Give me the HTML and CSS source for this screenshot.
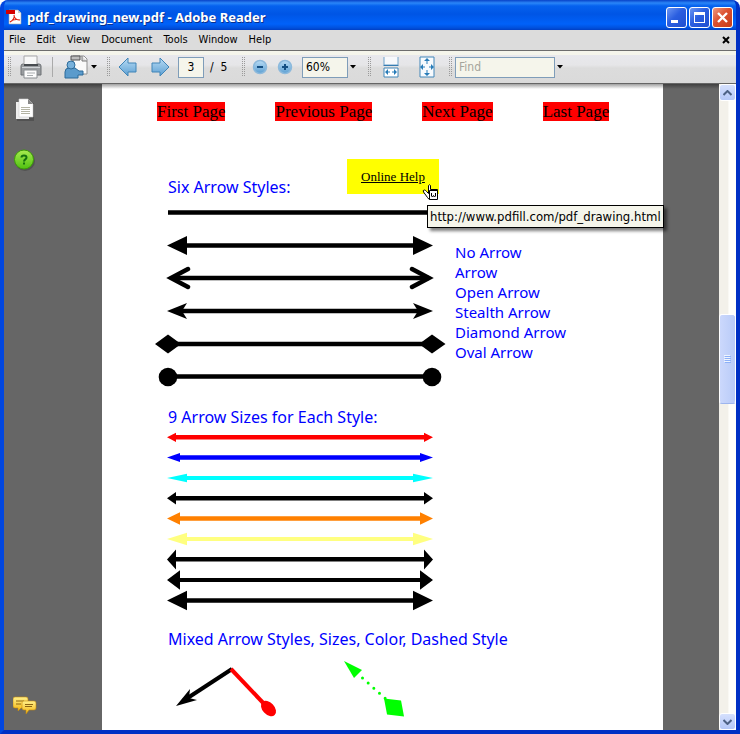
FILE: index.html
```html
<!DOCTYPE html>
<html lang="en">
  <head>
    <meta charset="UTF-8" />
    <meta name="viewport" content="width=device-width, initial-scale=1.0" />
    <title>pdf_drawing_new.pdf - Adobe Reader</title>
    <link rel="stylesheet" href="styles.css">
  </head>
  <body>
    <div class="window">
      <header class="titlebar">
        <svg class="title-icon" width="16" height="16" viewBox="0 0 16 16">
          <path d="M3 1h9l3 3v11H3z" fill="#fff" stroke="#aaa" stroke-width=".6" />
          <path d="M12 1v3h3z" fill="#ccc" />
          <path d="M0 1h9v4H0z" fill="#d50000" />
          <path d="M4 13c3-1 5-5 4-7 0 3 2 5 6 5-4-1-8 0-10 2z" fill="none" stroke="#e02010" stroke-width="1.1" />
        </svg>
        <h1 class="title">pdf_drawing_new.pdf - Adobe Reader</h1>
        <div class="window-buttons">
          <button class="window-button" aria-label="Minimize">
            <svg width="19" height="19" viewBox="0 0 19 19"><path d="M4 12h7v3H4z" fill="#fff" /></svg>
          </button>
          <button class="window-button" aria-label="Maximize">
            <svg width="19" height="19" viewBox="0 0 19 19"><path d="M4 4h11v11H4zM5 7v7h9V7z" fill="#fff" fill-rule="evenodd" /></svg>
          </button>
          <button class="window-button close" aria-label="Close">
            <svg width="19" height="19" viewBox="0 0 19 19"><path d="M5 5l9 9M14 5l-9 9" stroke="#fff" stroke-width="2.4" /></svg>
          </button>
        </div>
      </header>

      <nav class="menubar">
        <button class="menu">File</button>
        <button class="menu">Edit</button>
        <button class="menu">View</button>
        <button class="menu">Document</button>
        <button class="menu">Tools</button>
        <button class="menu">Window</button>
        <button class="menu">Help</button>
        <button class="document-close" aria-label="Close document">
          <svg width="8" height="8" viewBox="0 0 8 8"><path d="M1 1l6 6M7 1L1 7" stroke="#000" stroke-width="2" /></svg>
        </button>
      </nav>

      <div class="toolbar">
        <div class="tool-group">
          <span class="grip"></span>
          <button class="tool print" aria-label="Print">
            <svg width="24" height="24" viewBox="0 0 24 24">
              <path d="M2 11q0-2 2-2h16q2 0 2 2v9H2z" fill="#9a9da0" stroke="#6d7174" />
              <path d="M5 1h13v9H5z" fill="#f8f8f8" stroke="#a6a6a6" />
              <path d="M5 10h14" stroke="#484c50" stroke-width="2" />
              <path d="M3 12.500h18" stroke="#d1d4d7" />
              <path d="M5 15h13v8H5z" fill="#fcfcfc" stroke="#8a8e92" />
              <path d="M8 18h8M8 20.500h6" stroke="#a9adb0" />
            </svg>
          </button>
          <span class="separator"></span>
          <button class="tool share" aria-label="Share">
            <svg width="24" height="24" viewBox="0 0 24 24">
              <path d="M9 1h11l3 3v15H9z" fill="#fafafa" stroke="#929292" />
              <path d="M18 1v5h5" fill="#ddd" stroke="#777" />
              <path d="M7 1h9v4H7z" fill="#bdbdbd" stroke="#555" />
              <path d="M1 23v-6q0-4 4-4h6l4 3h4v4h-5v3z" fill="#5b9bcc" stroke="#2d6b9a" />
              <circle cx="7" cy="10" r="4" fill="#78b1db" stroke="#2d6b9a" />
            </svg>
            <svg class="caret" width="6" height="4" viewBox="0 0 6 4"><path d="M0 0h6L3 3.500z" /></svg>
          </button>
        </div>

        <div class="tool-group">
          <span class="grip"></span>
          <button class="tool previous" aria-label="Previous page">
            <svg width="20" height="20" viewBox="0 0 20 20">
              <path d="M1 10l9-9v5h8v9h-8v4z" fill="url(#steel)" stroke="#4185b7" />
            </svg>
          </button>
          <button class="tool next" aria-label="Next page">
            <svg width="20" height="20" viewBox="0 0 20 20">
              <path d="M19 10l-9-9v5H2v9h8v4z" fill="url(#steel)" stroke="#4185b7" />
            </svg>
          </button>
          <input class="field page-number" id="page-number" type="text" value="3" />
          <label class="page-total" for="page-number">/&nbsp; 5</label>
        </div>

        <div class="tool-group">
          <span class="grip"></span>
          <button class="tool zoom-out" aria-label="Zoom out">
            <svg width="16" height="16" viewBox="0 0 16 16">
              <circle cx="8" cy="8" r="6.500" fill="url(#steel)" stroke="#8cb9dc" stroke-width="1.500" />
              <path d="M5 8h6" stroke="#155083" stroke-width="2" />
            </svg>
          </button>
          <button class="tool zoom-in" aria-label="Zoom in">
            <svg width="16" height="16" viewBox="0 0 16 16">
              <circle cx="8" cy="8" r="6.500" fill="url(#steel)" stroke="#8cb9dc" stroke-width="1.500" />
              <path d="M5 8h6M8 5v6" stroke="#155083" stroke-width="2" />
            </svg>
          </button>
          <select class="field zoom-level" aria-label="Zoom level">
            <option>60%</option>
          </select>
          <svg class="caret" width="6" height="4" viewBox="0 0 6 4"><path d="M0 0h6L3 3.500z" /></svg>
        </div>

        <div class="tool-group">
          <span class="grip"></span>
          <button class="tool fit-width" aria-label="Fit width">
            <svg width="16" height="22" viewBox="0 0 16 22">
              <path d="M1 1v8h14V1" fill="#f7f9fc" stroke="#6da1c9" />
              <path d="M.5 9.500h15" stroke="#357cb2" />
              <path d="M1 21v-9h14v9z" fill="#fff" stroke="#4387b8" />
              <path d="M3 16h4M9 16h4" stroke="#287cb8" />
              <path d="M2 16l3-3v6zM14 16l-3-3v6z" fill="#287cb8" />
            </svg>
          </button>
          <button class="tool fit-page" aria-label="Fit page">
            <svg width="16" height="22" viewBox="0 0 16 22">
              <path d="M1 1h14v20H1z" fill="#f7fafd" stroke="#4387b8" />
              <path d="M8 3v5M8 14v5M2 11h4M10 11h4" stroke="#287cb8" />
              <path d="M8 2l3 3H5zM8 20l3-3H5zM1 11l3-3v6zM15 11l-3-3v6z" fill="#287cb8" />
            </svg>
          </button>
        </div>

        <div class="tool-group">
          <span class="grip"></span>
          <input class="field find" type="text" placeholder="Find" aria-label="Find" />
          <svg class="caret" width="6" height="4" viewBox="0 0 6 4"><path d="M0 0h6L3 3.500z" /></svg>
        </div>
      </div>

      <div class="workspace">
        <aside class="sidebar">
          <button class="side-button" aria-label="Pages">
            <svg width="20" height="24" viewBox="0 0 20 24">
              <path d="M2 5h17v18H2z" fill="#444" opacity=".6" />
              <path d="M1 4h13v17H1z" fill="#eee" />
              <path d="M4 1h9l5 5v13H4z" fill="#fff" stroke="#ccc" stroke-width=".6" />
              <path d="M13 1v5h5z" fill="#888" />
              <path d="M6 9.500h9M6 11.500h9M6 13.500h9M6 15.500h9" stroke="#b4b4a4" />
            </svg>
          </button>
          <button class="side-button" aria-label="How to">
            <svg width="22" height="22" viewBox="0 0 22 22">
              <circle cx="11" cy="12" r="10" fill="#444" opacity=".6" />
              <circle cx="10" cy="10.500" r="9.500" fill="url(#lime)" stroke="#3d9c08" />
              <path d="M7.500 8.500q0-2 2.500-2t2.500 2q0 1-1.200 1.800T10 12.500" fill="none" stroke="#15700e" stroke-width="2" />
              <path d="M9 13.500h2v2H9z" fill="#15700e" />
            </svg>
          </button>
          <button class="side-button comments" aria-label="Comments">
            <svg width="24" height="18" viewBox="0 0 24 18">
              <path d="M2 1h11q2 0 2 2v7q0 2-2 2H8l-3 3v-3H2q-2 0-2-2V3q0-2 2-2z" fill="url(#gold)" stroke="#c78b0a" stroke-width=".6" />
              <path d="M3 5h8M3 8h5" stroke="#8c6513" />
              <path d="M11 5h10q2 0 2 2v5q0 2-2 2h-5l-3 4v-4h-2q-2 0-2-2V7q0-2 2-2z" fill="url(#gold)" stroke="#c78b0a" stroke-width=".6" />
              <path d="M12 8.500h8M12 10.500h7" stroke="#8c6513" />
            </svg>
          </button>
        </aside>

        <main class="viewer">
          <article class="page">
            <nav class="page-links">
              <a class="page-link" href="#first">First Page</a>
              <a class="page-link" href="#previous">Previous Page</a>
              <a class="page-link" href="#next">Next Page</a>
              <a class="page-link" href="#last">Last Page</a>
            </nav>

            <section class="styles-section">
              <div class="styles-header">
                <h2 class="heading">Six Arrow Styles:</h2>
                <a class="help-link" href="http://www.pdfill.com/pdf_drawing.html">
                  Online Help
                  <svg class="cursor" width="17" height="17" viewBox="0 0 17 17">
                    <path d="M6.500 1.500q1-1.500 2 0v4h7v4l-7 6q-2 0-3-2l-4-5.500q-1-2 1-2 1 0 2 1.500l2 2z" fill="#fff" stroke="#000" />
                    <path d="M7.500 6.500h8v9h-8z" fill="#fff" stroke="#000" />
                    <path d="M9.500 9v3l1 1 1-1.500 1 1.500 1-1V9" fill="none" stroke="#000" />
                  </svg>
                  <span class="tooltip">http://www.pdfill.com/pdf_drawing.html</span>
                </a>
              </div>
              <div class="styles-body">
                <svg class="drawing" width="265" height="200" viewBox="0 0 265 200">
                  <g stroke="#000" stroke-width="4.500">
                    <path d="M0 15.500h264M10 48.500h245M4 81h257M10 114h245M5 147h255M5 179.500h255" />
                  </g>
                  <path d="M-1 48.500l20-9.500v19zM265 48.500l-20-9.500v19z" />
                  <path d="M20 72L3 81l17 9M244 72l17 9-17 9" fill="none" stroke="#000" stroke-width="4.500" stroke-linecap="round" />
                  <path d="M-1 114l20-8-5 8 5 8zM265 114l-20-8 5 8-5 8z" />
                  <path d="M-13 147L0 137.500l13 9.500L0 156.500zM251 147l13-9.500 13.500 9.500-13.500 9.500z" />
                  <circle cx="0" cy="180" r="9.300" />
                  <circle cx="264" cy="180" r="9.300" />
                </svg>
                <ul class="style-names">
                  <li>No Arrow</li>
                  <li>Arrow</li>
                  <li>Open Arrow</li>
                  <li>Stealth Arrow</li>
                  <li>Diamond Arrow</li>
                  <li>Oval Arrow</li>
                </ul>
              </div>
            </section>

            <section class="sizes-section">
              <h2 class="heading">9 Arrow Sizes for Each Style:</h2>
              <svg class="drawing" width="265" height="192" viewBox="0 0 265 192">
                <path fill="#f00" d="M6 8h252v4.500H6zM-1 10.300l9-4.600v9.200zM265 10.300l-9 4.600v-9.200z" />
                <path fill="#00f" d="M8 28.300h248v4.500H8zM-1 30.500l13-4.500v9zM265 30.500l-13 4.500v-9z" />
                <path fill="#0ff" d="M15 49h234v4H15zM-1 51l20-4.300v8.600zM265 51l-20 4.300v-8.600z" />
                <path fill="#000" d="M6 69h252v4.500H6zM-1 71.300l9-6.300v12.600zM265 71.300l-9 6.300v-12.600z" />
                <path fill="#ff8000" d="M8 89.300h248v4.500H8zM-1 91.500l13-6.300v12.600zM265 91.500l-13 6.300v-12.600z" />
                <path fill="#ffff80" d="M15 110h234v4H15zM-1 112l20-6.300v12.600zM265 112l-20 6.300v-12.600z" />
                <path fill="#000" d="M6 130h252v4.500H6zM-1 132.500l9-10v20zM265 132.500l-9 10v-20z" />
                <path fill="#000" d="M8 151h248v4H8zM-1 153l13-9.700v19.400zM265 153l-13 9.700v-19.400z" />
                <path fill="#000" d="M15 171.300h234v4.500H15zM-1 173.500l20-9.700v19.400zM265 173.500l-20 9.700v-19.400z" />
              </svg>
            </section>

            <section class="mixed-section">
              <h2 class="heading">Mixed Arrow Styles, Sizes, Color, Dashed Style</h2>
              <svg class="drawing" width="265" height="72" viewBox="0 0 265 72">
                <path d="M15 52L64 20" stroke="#000" stroke-width="4" />
                <path d="M8 57l14-17-1 9 8 2z" />
                <path d="M63 20l36 38" stroke="#f00" stroke-width="4" />
                <ellipse cx="100.500" cy="59.500" rx="9" ry="6" transform="rotate(47 100.500 59.500)" fill="#f00" />
                <path d="M176 12l18 9-8 8z" fill="#0f0" />
                <path d="M194.500 29l24 21.500" stroke="#0f0" stroke-width="3" stroke-linecap="round" stroke-dasharray="0 7.600" />
                <path d="M216 49.500l17 2 3 16-17-2z" fill="#0f0" />
              </svg>
            </section>
          </article>
        </main>

        <div class="scrollbar">
          <button class="scroll-button" aria-label="Scroll up">
            <svg width="9" height="6" viewBox="0 0 9 6"><path d="M.5 5l4-4 4 4" fill="none" stroke="#4d6185" stroke-width="2" /></svg>
          </button>
          <div class="scroll-track">
            <div class="scroll-thumb">
              <svg width="7" height="8" viewBox="0 0 7 8">
                <path d="M0 .5h6M0 2.500h6M0 4.500h6M0 6.500h6" stroke="#eef4fe" />
                <path d="M1 1.500h6M1 3.500h6M1 5.500h6M1 7.500h6" stroke="#8cb0f8" />
              </svg>
            </div>
          </div>
          <button class="scroll-button" aria-label="Scroll down">
            <svg width="9" height="6" viewBox="0 0 9 6"><path d="M.5 1l4 4 4-4" fill="none" stroke="#4d6185" stroke-width="2" /></svg>
          </button>
        </div>
      </div>
    </div>

    <!-- Shared gradients for the icons -->
    <svg class="defs" width="0" height="0">
      <linearGradient id="steel" x1="0" y1="0" x2="0" y2="1">
        <stop offset="0" stop-color="#b9dcf5" />
        <stop offset="1" stop-color="#5c9fd2" />
      </linearGradient>
      <linearGradient id="lime" x1="0" y1="0" x2="0" y2="1">
        <stop offset="0" stop-color="#a8ec50" />
        <stop offset="1" stop-color="#4fc010" />
      </linearGradient>
      <linearGradient id="gold" x1="0" y1="0" x2="0" y2="1">
        <stop offset="0" stop-color="#fff08a" />
        <stop offset="1" stop-color="#f2b410" />
      </linearGradient>
    </svg>
  </body>
</html>
```
FILE: styles.css
```css
* {
  box-sizing: border-box;
}

body {
  margin: 0;
  background: #fff;
  font-family: "DejaVu Sans Condensed", "DejaVu Sans", sans-serif;
  font-size: 11px;
  color: #000;
}

button,
input,
select {
  font: inherit;
  color: inherit;
}

button {
  padding: 0;
  border: 0;
  background: none;
}

svg {
  display: block;
}

.window {
  display: flex;
  flex-direction: column;
  height: 100vh;
  border: 4px solid #0046e0;
  border-top: 0;
  border-color: #0046e0 #0030c4 #0030c4 #0046e0;
  border-radius: 8px 8px 0 0;
  background: #0054e3;
  overflow: hidden;
}

/* Title bar */
.titlebar {
  display: flex;
  flex: none;
  align-items: center;
  height: 30px;
  margin: 0 -4px;
  padding: 4px 7px 0 6px;
  background: linear-gradient(#0842c8 0, #2a86f8 3px, #0561ee 6px, #0055e5 14px, #0062fa 24px, #0050dc 28px, #003fc4 30px);
}

.title {
  flex: 1;
  margin: 0 0 0 5px;
  font-family: "Noto Sans", sans-serif;
  font-size: 13px;
  font-weight: bold;
  line-height: 16px;
  color: #fff;
  text-shadow: 1px 1px #0a2f8c;
}

.window-buttons {
  display: flex;
  gap: 2px;
}

.window-button {
  width: 21px;
  height: 21px;
  border: 1px solid #fff;
  border-radius: 3px;
  background: linear-gradient(135deg, #6d97f3, #2a5ee0 45%, #1f4fd0);
}

.window-button.close {
  background: linear-gradient(135deg, #f09a80, #dc5030 45%, #c53c18);
}

/* Menu bar */
.menubar {
  display: flex;
  flex: none;
  align-items: center;
  height: 21px;
  border-bottom: 1px solid #6d6d6d;
  background: #dcdcdc;
}

.menu {
  padding: 0 5px 0 6px;
  line-height: 16px;
}

.menu:first-child {
  padding-left: 5px;
}

.document-close {
  margin-left: auto;
  margin-right: 6px;
}

/* Toolbar */
.toolbar {
  display: flex;
  flex: none;
  align-items: center;
  gap: 11px;
  height: 33px;
  padding: 0 3px;
  border-bottom: 1px solid #666;
  background: linear-gradient(#f5f5eb 0, #f5f5eb 4px, #e8e8ec 4px, #e6e6e8 14px, #dcdcdc 17px, #dadada 32px);
  font-size: 12px;
}

.tool-group {
  display: flex;
  align-items: center;
}

.grip {
  width: 4px;
  height: 20px;
  background: repeating-conic-gradient(#9a9a9a 0 25%, transparent 0 100%) 0 0 / 2px 2px;
}

.tool {
  display: flex;
  align-items: center;
}

.print {
  margin-left: 8px;
}

.separator {
  width: 1px;
  height: 20px;
  margin: 0 11px 0 9px;
  background: #aaa;
}

.share {
  margin-right: -2px;
}

.share .caret {
  margin-left: 3px;
}

.previous {
  margin: 0 12px 0 8px;
}

.next {
  margin-right: 8px;
}

.field {
  height: 21px;
  margin: 0;
  padding: 0 3px;
  border: 1px solid #7f9db9;
  border-radius: 0;
  background: #f5f5eb;
}

.page-number {
  width: 26px;
  text-align: center;
}

.page-total {
  width: 26px;
  padding-left: 6px;
}

.zoom-out {
  margin: 0 9px 0 7px;
}

.zoom-in {
  margin-right: 9px;
}

.zoom-level {
  width: 46px;
  appearance: none;
}

.zoom-level + .caret,
.find + .caret {
  margin-left: 2px;
}

.fit-width {
  margin: 0 20px 0 12px;
}

.fit-page {
  margin-right: 2px;
}

.find {
  width: 100px;
  margin-left: 3px;
}

.find::placeholder {
  color: #a5a59b;
  opacity: 1;
}

/* Work area */
.workspace {
  display: flex;
  flex: 1;
  min-height: 0;
  background: linear-gradient(#404040, #666 5px);
}

.sidebar {
  display: flex;
  flex-direction: column;
  align-items: center;
  gap: 27px;
  width: 42px;
  padding: 14px 0 16px;
}

.comments {
  margin-top: auto;
}

.viewer {
  flex: 1;
  min-width: 0;
  padding: 0 56px;
  overflow: hidden;
}

.page {
  min-height: 100%;
  padding: 18px 0 0 66px;
  background: linear-gradient(#a0a0a0, #fff 5px);
}

.page-links {
  display: flex;
  gap: 50px;
  margin-left: -11px;
  font-family: "Liberation Serif", serif;
  font-size: 17px;
  line-height: 19px;
}

.page-link {
  background: #f00;
  color: #000;
  text-decoration: none;
}

.heading {
  margin: 0;
  font-size: 16px;
  font-weight: normal;
}

.heading,
.style-names {
  font-family: "Noto Sans", sans-serif;
  line-height: 20px;
  color: #00f;
}

.drawing {
  overflow: visible;
}

.styles-section {
  margin-top: 38px;
}

.styles-header {
  display: grid;
  grid-template-columns: 179px auto;
  justify-content: start;
  height: 38px;
}

.styles-header .heading {
  align-self: end;
}

.help-link {
  position: relative;
  height: 35px;
  padding: 0 14px;
  background: #ff0;
  font-family: "Liberation Serif", serif;
  font-size: 13px;
  line-height: 35px;
  color: #000;
}

.cursor {
  position: absolute;
  top: 25px;
  right: 0;
}

.tooltip {
  position: absolute;
  top: 46px;
  left: 80px;
  padding: 0 2px;
  border: 1px solid #000;
  background: #f5f5eb;
  box-shadow: 3px 3px 3px rgba(0, 0, 0, 0.5);
  font-family: "DejaVu Sans Condensed", "DejaVu Sans", sans-serif;
  font-size: 13px;
  line-height: 21px;
  white-space: nowrap;
}

.styles-body {
  display: flex;
  gap: 22px;
}

.style-names {
  margin: 45px 0 0;
  padding: 0;
  list-style: none;
  font-size: 15px;
}

.sizes-section {
  margin-top: 10px;
}

.mixed-section {
  margin-top: 10px;
}

/* Scroll bar */
.scrollbar {
  display: flex;
  flex-direction: column;
  width: 17px;
  background: linear-gradient(90deg, #f3f1ea 0 50%, #fefefb 60%);
}

.scroll-button {
  display: flex;
  align-items: center;
  justify-content: center;
  width: 17px;
  height: 17px;
  border: 1px solid #fff;
  border-radius: 3px;
  background: linear-gradient(#d5e0fd, #b4c7f7);
}

.scroll-track {
  flex: 1;
}

.scroll-thumb {
  display: flex;
  align-items: center;
  justify-content: center;
  height: 90px;
  margin-top: 213px;
  border: 1px solid #fff;
  border-bottom-color: #9db5ee;
  border-radius: 3px;
  background: linear-gradient(90deg, #cbd8fc, #b9cbf8);
}

.defs {
  position: absolute;
}
```
